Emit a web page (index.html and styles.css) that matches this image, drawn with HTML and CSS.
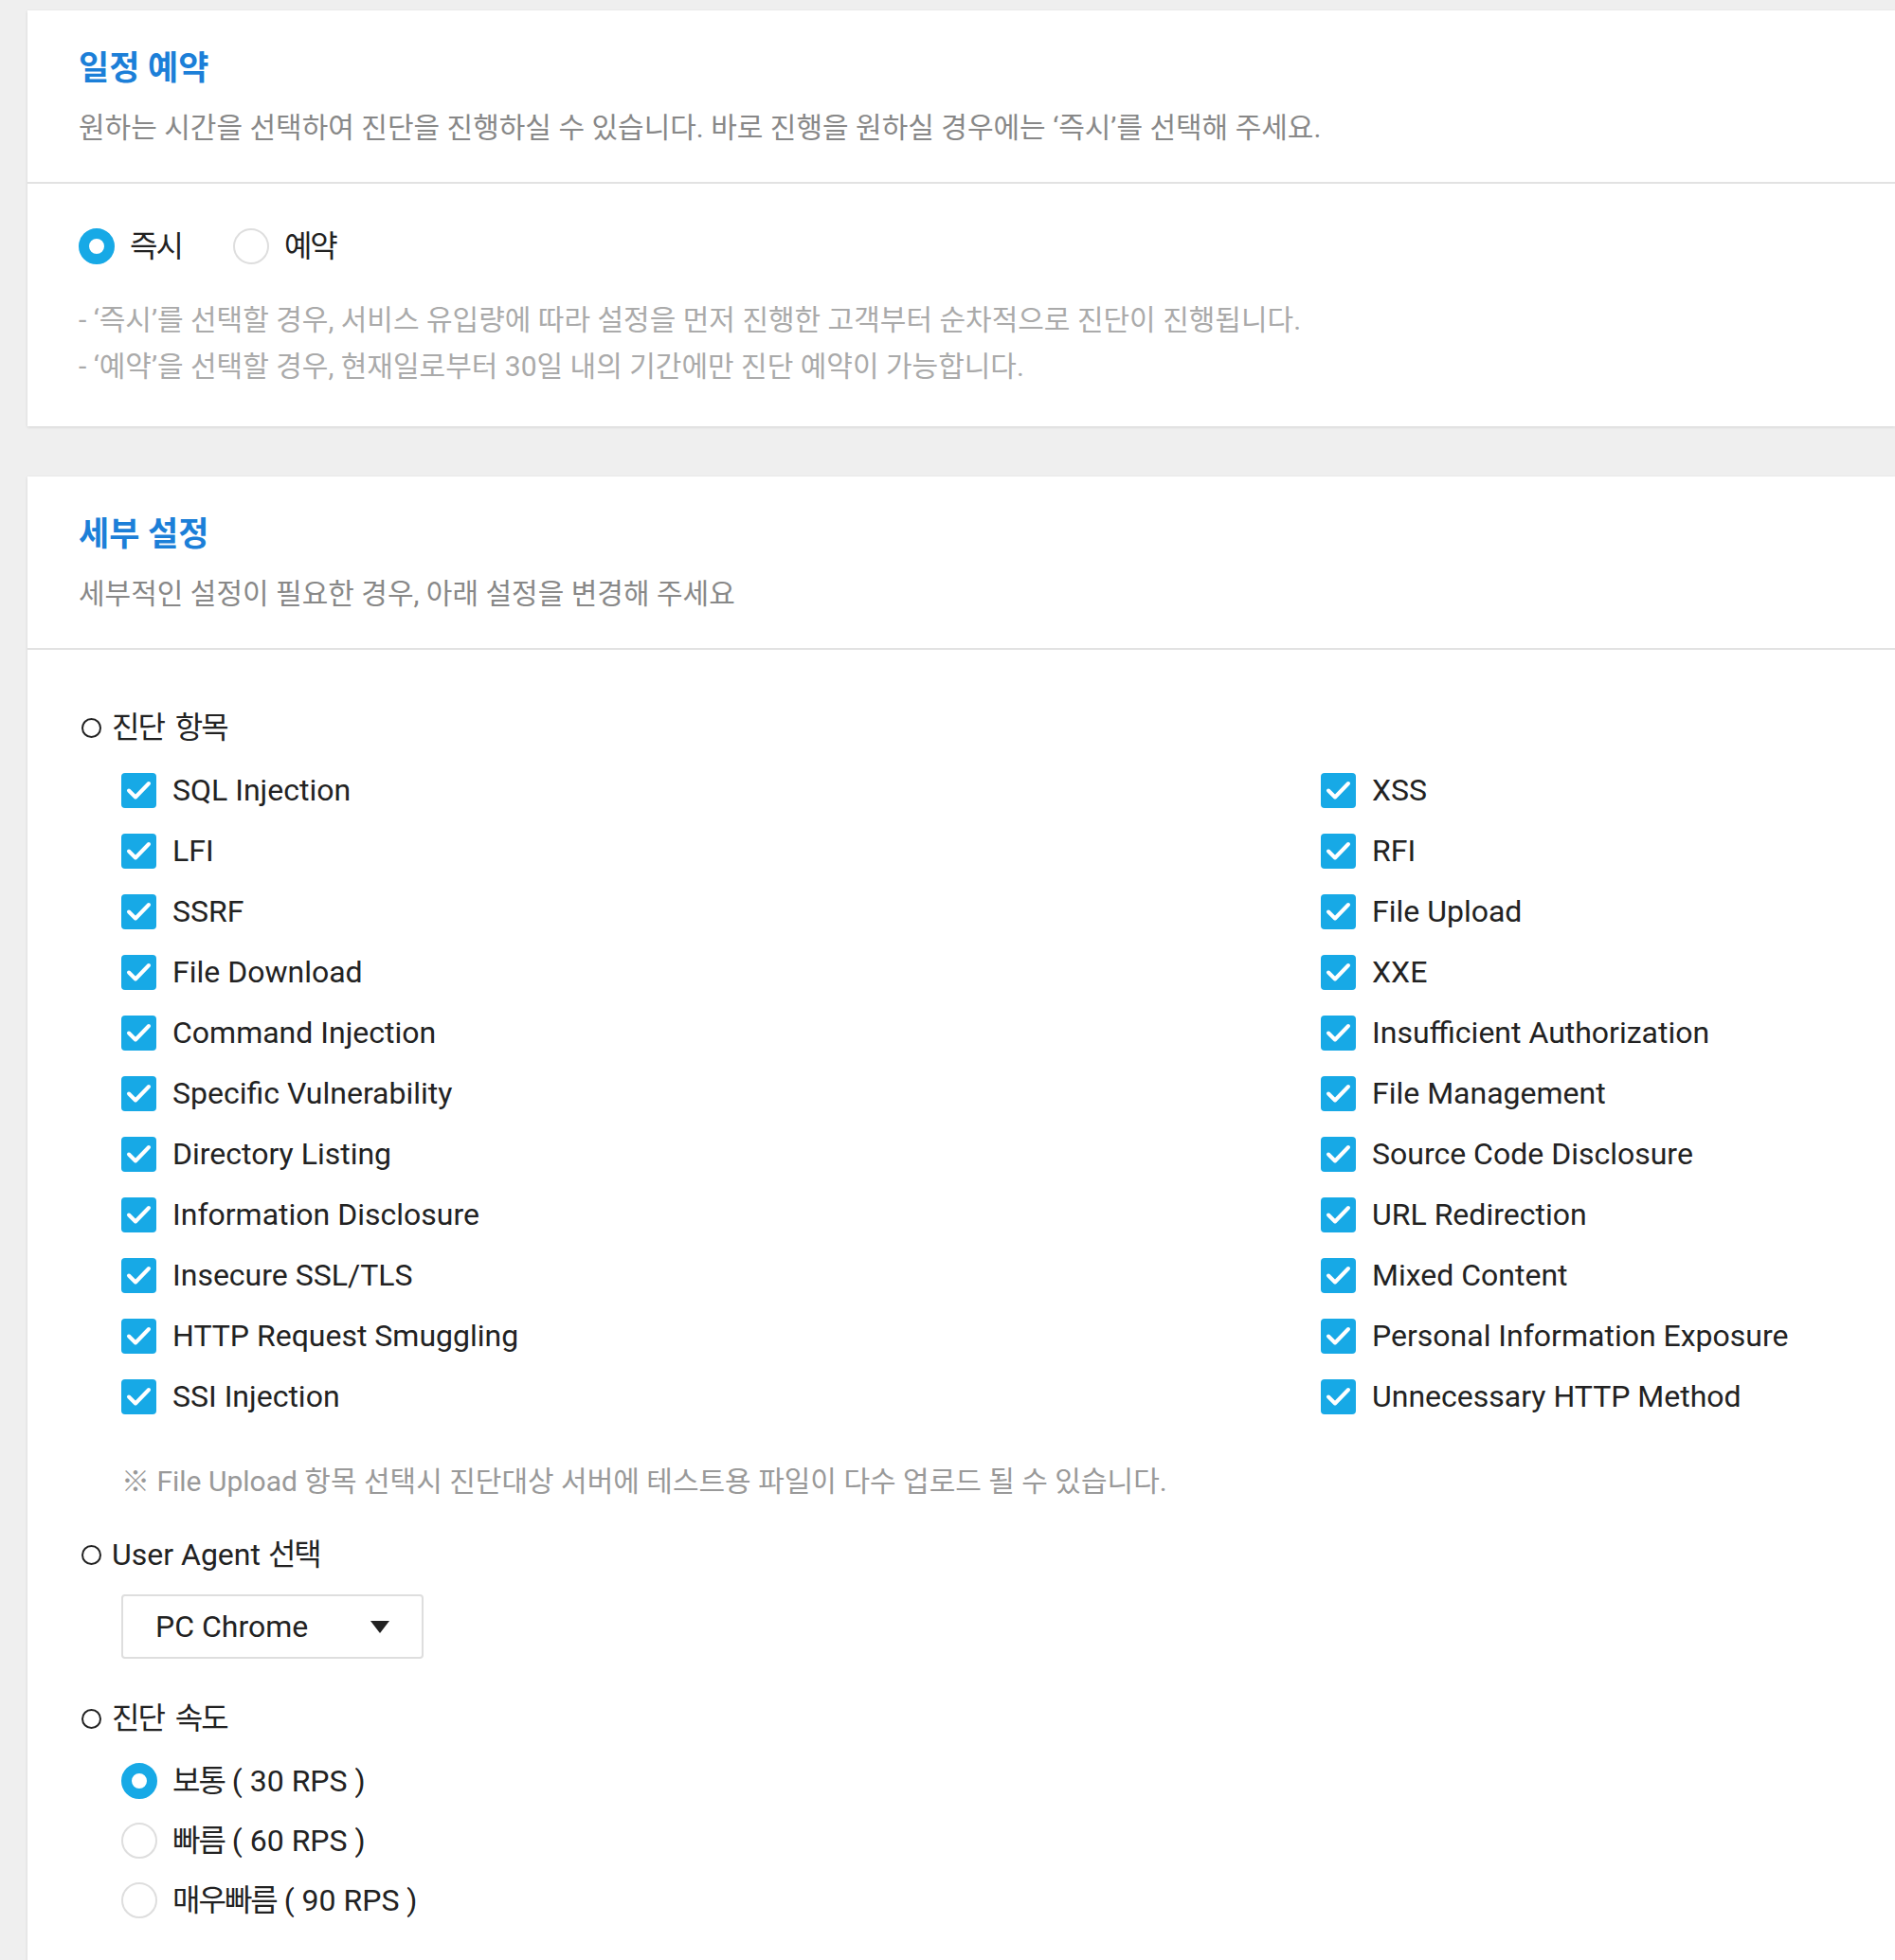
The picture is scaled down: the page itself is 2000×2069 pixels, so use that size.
FILE: index.html
```html
<!DOCTYPE html>
<html lang="ko">
<head>
<meta charset="UTF-8">
<title>진단 설정</title>
<link rel="stylesheet" href="styles.css">
</head>
<body>
<div class="page">

    <section class="card">
        <div class="card-head">
            <h2>일정 예약</h2>
            <p class="desc">원하는 시간을 선택하여 진단을 진행하실 수 있습니다. 바로 진행을 원하실 경우에는 ‘즉시’를 선택해 주세요.</p>
        </div>
        <div class="card-body schedule">
            <div class="radio-row">
                <label class="radio checked"><span class="dot"></span>즉시</label>
                <label class="radio"><span class="dot"></span>예약</label>
            </div>
            <ul class="notes">
                <li>- ‘즉시’를 선택할 경우, 서비스 유입량에 따라 설정을 먼저 진행한 고객부터 순차적으로 진단이 진행됩니다.</li>
                <li>- ‘예약’을 선택할 경우, 현재일로부터 30일 내의 기간에만 진단 예약이 가능합니다.</li>
            </ul>
        </div>
    </section>

    <section class="card">
        <div class="card-head">
            <h2>세부 설정</h2>
            <p class="desc">세부적인 설정이 필요한 경우, 아래 설정을 변경해 주세요</p>
        </div>
        <div class="card-body detail">
            <h3 class="sub"><span class="ring"></span><span class="ko">진단 항목</span></h3>
            <div class="checks" id="checks"></div>
            <p class="warn">※ File Upload 항목 선택시 진단대상 서버에 테스트용 파일이 다수 업로드 될 수 있습니다.</p>

            <h3 class="sub agent"><span class="ring"></span>User Agent <span class="ko">선택</span></h3>
            <div class="select">
                <span>PC Chrome</span>
                <svg width="20" height="13" viewBox="0 0 20 13"><path d="M0 0H20L10 13Z" fill="#222"/></svg>
            </div>

            <h3 class="sub speed"><span class="ring"></span><span class="ko">진단 속도</span></h3>
            <div class="speed-list">
                <label class="radio checked"><span class="dot"></span><span class="ko">보통</span>&nbsp;( 30 RPS )</label>
                <label class="radio"><span class="dot"></span><span class="ko">빠름</span>&nbsp;( 60 RPS )</label>
                <label class="radio"><span class="dot"></span><span class="ko">매우빠름</span>&nbsp;( 90 RPS )</label>
            </div>
        </div>
    </section>

</div>
<script>
// left column first, then right column, row by row
const items = [
    ['SQL Injection', 'XSS'],
    ['LFI', 'RFI'],
    ['SSRF', 'File Upload'],
    ['File Download', 'XXE'],
    ['Command Injection', 'Insufficient Authorization'],
    ['Specific Vulnerability', 'File Management'],
    ['Directory Listing', 'Source Code Disclosure'],
    ['Information Disclosure', 'URL Redirection'],
    ['Insecure SSL/TLS', 'Mixed Content'],
    ['HTTP Request Smuggling', 'Personal Information Exposure'],
    ['SSI Injection', 'Unnecessary HTTP Method']
];
const box = document.getElementById('checks');
const tick = '<svg width="37" height="37" viewBox="0 0 37 37"><rect width="37" height="37" rx="4" fill="#17a9e6"/><path d="M8 18.5L15 25.5L29 11" fill="none" stroke="#fff" stroke-width="4" stroke-linecap="round" stroke-linejoin="round"/></svg>';
items.forEach(row => {
    row.forEach(name => {
        const label = document.createElement('label');
        label.className = 'check';
        label.innerHTML = tick + '<span>' + name + '</span>';
        box.appendChild(label);
    });
});
</script>
</body>
</html>
```

FILE: styles.css
```css
/* page */
body {
    margin: 0;
    background-color: #efefef;
    font-family: Roboto, "Noto Sans CJK KR", sans-serif;
    color: #222;
    overflow: hidden;
}
.page {
    padding: 11px 0 0 29px;
}
.card {
    background-color: #fff;
    box-shadow: 0 1px 3px rgba(0, 0, 0, 0.12);
    margin-bottom: 53px;
}

/* card header */
.card-head {
    padding: 42px 54px 39px;
    border-bottom: 2px solid #e2e2e2;
}
h2 {
    margin: 0;
    font-size: 35px;
    line-height: 40px;
    font-weight: 700;
    color: #1c7fd8;
}
.desc {
    margin: 24px 0 0;
    font-size: 30px;
    line-height: 36px;
    color: #888;
}
.card-body {
    padding: 0 54px;
}

/* hangul in the 32px labels runs a bit tighter */
.ko {
    letter-spacing: -2px;
    word-spacing: 6px;
}

/* radios */
.radio {
    display: flex;
    align-items: center;
    font-size: 32px;
    line-height: 40px;
}
.dot {
    box-sizing: border-box;
    width: 38px;
    height: 38px;
    border-radius: 50%;
    border: 2px solid #dedede;
    margin-right: 16px;
    flex-shrink: 0;
}
.radio.checked .dot {
    border: 11px solid #17a9e6;
}

/* schedule card */
.schedule {
    padding-top: 46px;
    padding-bottom: 39px;
}
.radio-row {
    display: flex;
    gap: 54px;
}
.radio-row .radio {
    letter-spacing: -2px;
}
.notes {
    list-style: none;
    margin: 33px 0 0;
    padding: 0;
    font-size: 30px;
    line-height: 49px;
    color: #aaa;
}

/* detail card */
.detail {
    padding-top: 62px;
    padding-bottom: 40px;
}
.sub {
    display: flex;
    align-items: center;
    margin: 0;
    font-size: 32px;
    line-height: 40px;
    font-weight: 400;
    white-space: pre;
}
.ring {
    box-sizing: border-box;
    width: 21px;
    height: 21px;
    border: 2px solid #222;
    border-radius: 50%;
    margin: 0 11px 0 3px;
}
.checks {
    display: grid;
    grid-template-columns: 1266px 1fr;
    grid-auto-rows: 64px;
    margin: 14px 0 0 45px;
}
.check {
    display: flex;
    align-items: center;
    font-size: 32px;
}
.check svg {
    margin-right: 17px;
    flex-shrink: 0;
}
.warn {
    margin: 38px 0 0 45px;
    font-size: 30px;
    line-height: 40px;
    color: #999;
}
.sub.agent {
    margin-top: 37px;
}
.select {
    box-sizing: border-box;
    display: flex;
    align-items: center;
    justify-content: space-between;
    width: 319px;
    height: 68px;
    margin: 22px 0 0 45px;
    padding: 0 34px 0 34px;
    border: 2px solid #dedede;
    border-radius: 4px;
    font-size: 32px;
}
.sub.speed {
    margin-top: 43px;
}
.speed-list {
    margin: 14px 0 0 45px;
}
.speed-list .radio {
    height: 63px;
    white-space: pre;
}
```
